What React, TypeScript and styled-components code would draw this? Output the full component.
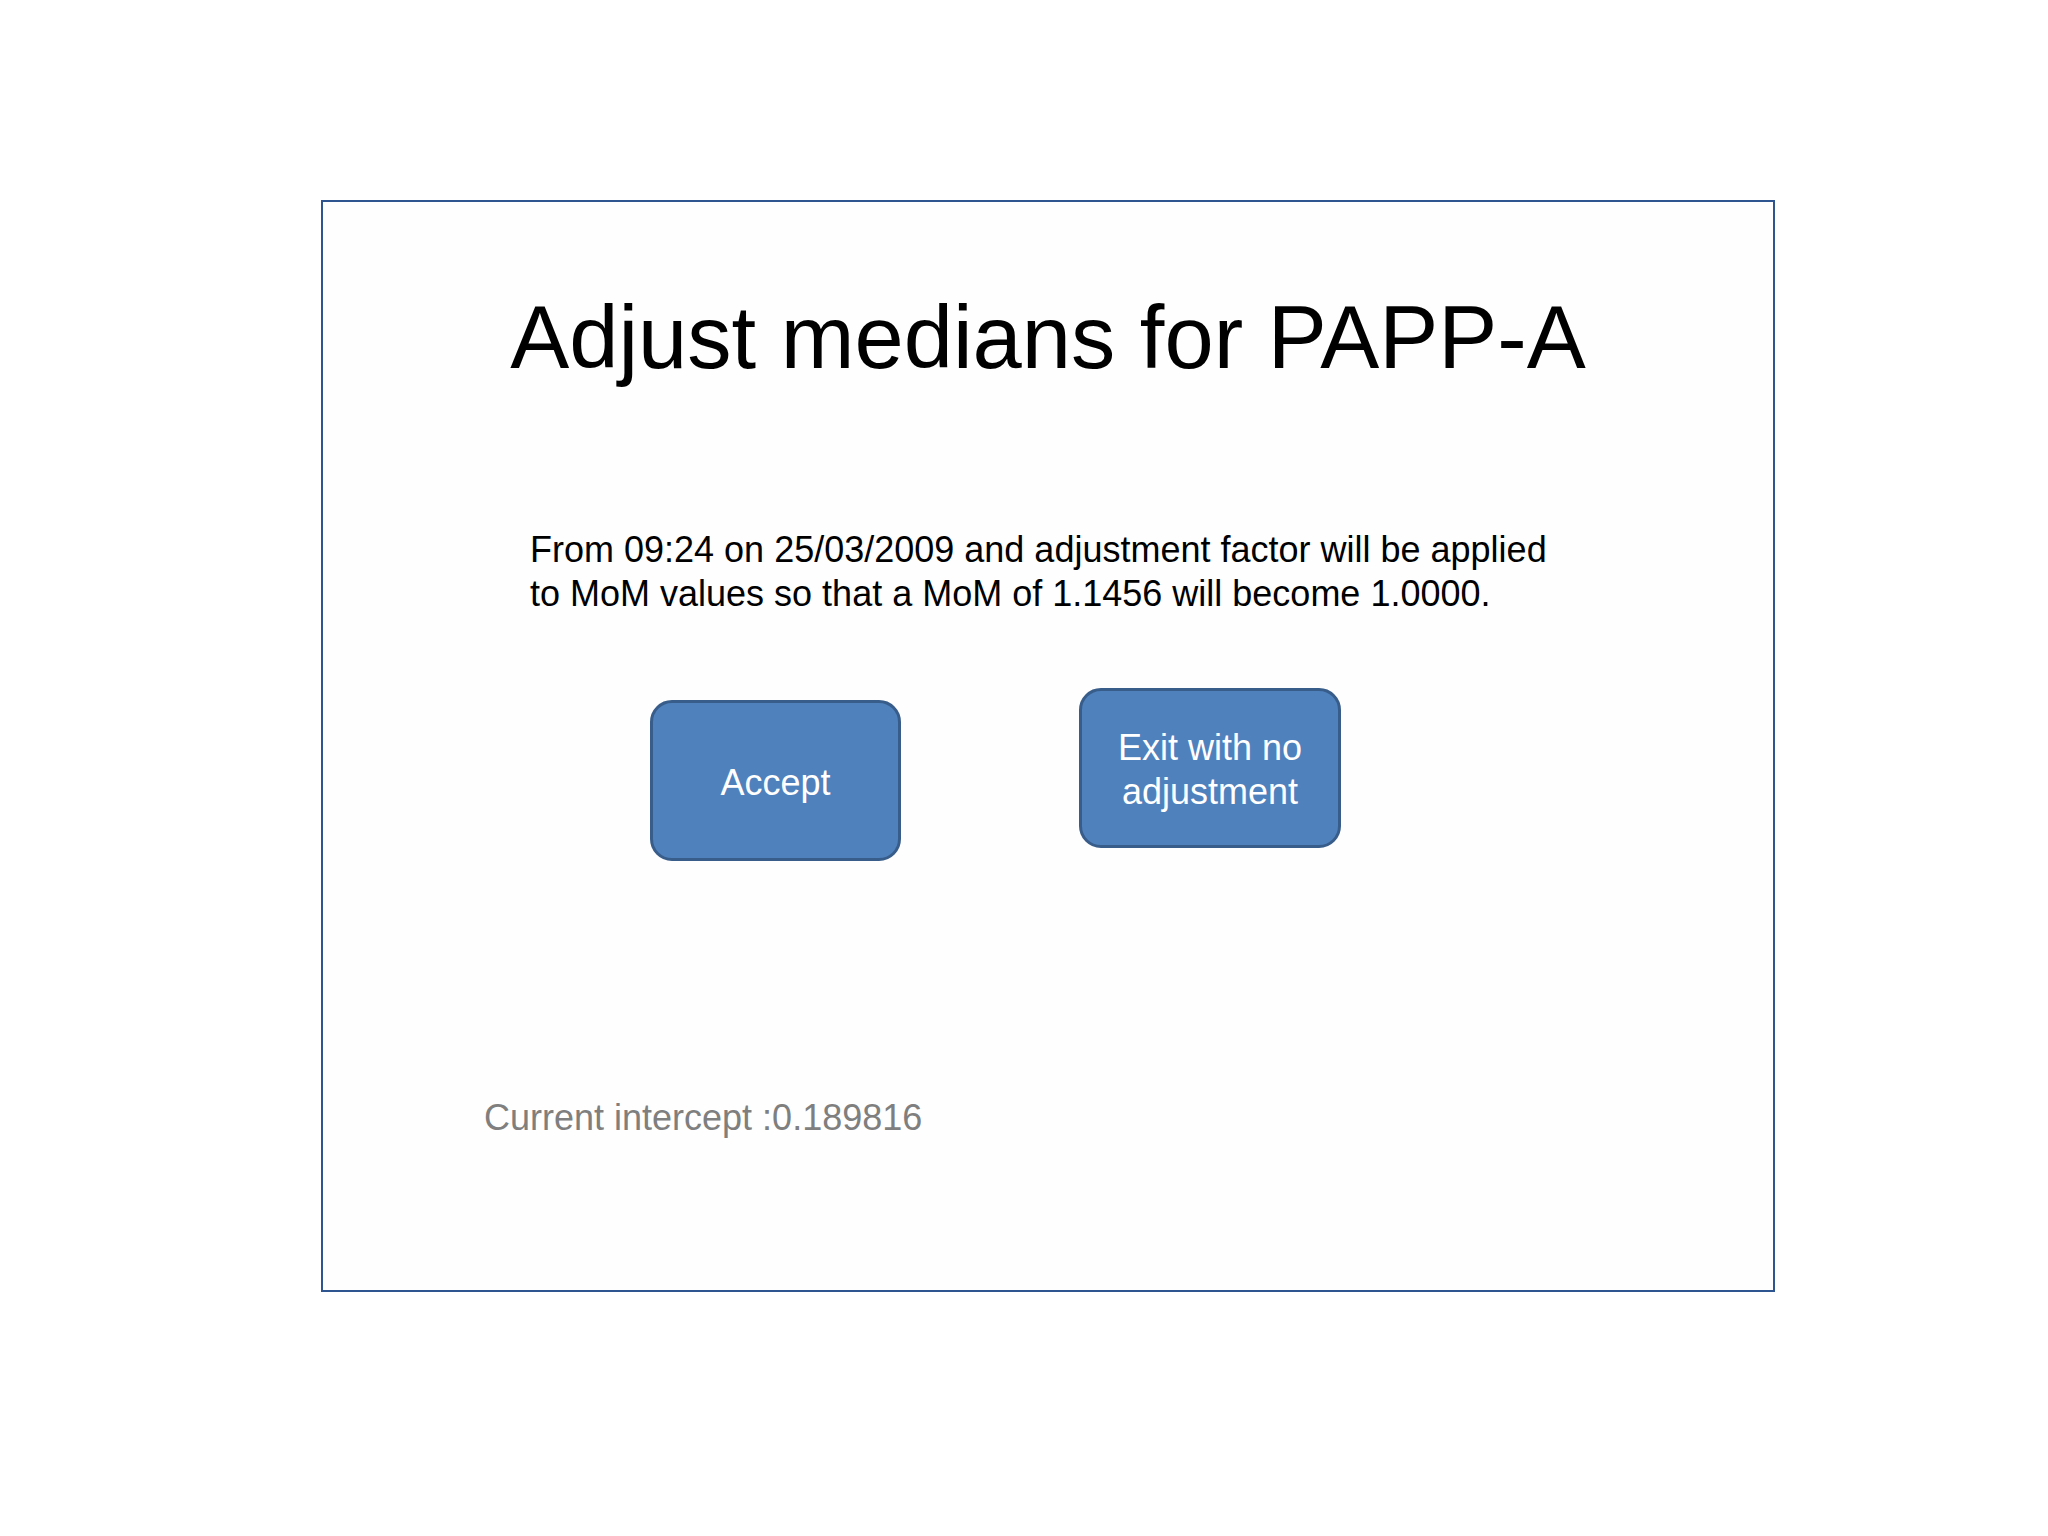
import styled, { createGlobalStyle } from "styled-components";

const GlobalStyle = createGlobalStyle`
  html, body {
    margin: 0;
    padding: 0;
    background: #ffffff;
  }
  body {
    font-family: "Liberation Sans", Arial, sans-serif;
  }
`;

const Page = styled.div`
  width: 2048px;
  height: 1536px;
  padding: 200px 0 0 321px;
  box-sizing: border-box;
`;

const Frame = styled.section`
  width: 1454px;
  height: 1092px;
  box-sizing: border-box;
  border: 2px solid #2f5590;
  background: #fefefe;
  display: flex;
  flex-direction: column;
`;

const Title = styled.h1`
  margin: 86px 0 0;
  font-size: 88.5px;
  font-weight: 400;
  line-height: 100px;
  color: #000000;
  text-align: center;
`;

const Message = styled.p`
  margin: 140px 0 0 207px;
  font-size: 36px;
  line-height: 44px;
  color: #000000;
`;

const ButtonRow = styled.div`
  display: flex;
  align-items: flex-start;
  gap: 178px;
  margin: 72px 0 0 327px;
`;

const ActionButton = styled.button<{ $width: number; $height: number; $offset: number }>`
  width: ${({ $width }) => $width}px;
  height: ${({ $height }) => $height}px;
  margin-top: ${({ $offset }) => $offset}px;
  box-sizing: border-box;
  border: 3px solid #385d8a;
  border-radius: 22px;
  background: #4f81bd;
  color: #ffffff;
  font-family: "Liberation Sans", Arial, sans-serif;
  font-size: 36px;
  line-height: 44px;
  padding: 4px 12px 0;
  display: flex;
  align-items: center;
  justify-content: center;
  text-align: center;
  cursor: pointer;
`;

const Intercept = styled.div`
  margin: 235px 0 0 161px;
  font-size: 36px;
  line-height: 44px;
  color: #7f7f7f;
`;

const App = () => (
  <>
    <GlobalStyle />
    <Page>
      <Frame>
        <Title>Adjust medians for PAPP-A</Title>
        <Message>
          From 09:24 on 25/03/2009 and adjustment factor will be applied
          <br />
          to MoM values so that a MoM of 1.1456 will become 1.0000.
        </Message>
        <ButtonRow>
          <ActionButton $width={251} $height={161} $offset={12}>
            Accept
          </ActionButton>
          <ActionButton $width={262} $height={160} $offset={0}>
            Exit with no
            <br />
            adjustment
          </ActionButton>
        </ButtonRow>
        <Intercept>Current intercept :0.189816</Intercept>
      </Frame>
    </Page>
  </>
);

export default App;
